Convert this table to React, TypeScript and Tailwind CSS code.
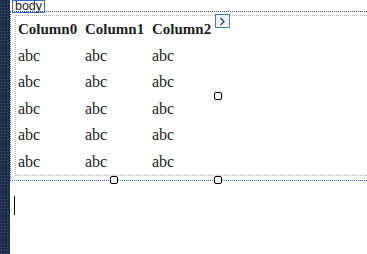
const columns = ['Column0', 'Column1', 'Column2'];
const rows = [0, 1, 2, 3, 4];

const Handle = ({ x, y }: { x: number; y: number }) => (
  <div
    className="absolute w-[8px] h-[8px] rounded-[2px] border-[1.5px] border-black bg-white"
    style={{ left: x - 4, top: y - 4 }}
  />
);

export default function App() {
  return (
    <div className="relative w-[367px] h-[254px] flex bg-white overflow-hidden">
      {/* dark left strip */}
      <div className="w-[10px] h-full shrink-0 bg-[#1f2c4a] bg-[image:radial-gradient(#3e5078_0.8px,transparent_0.9px)] bg-[size:3px_3px]" />

      <div className="flex-1 flex flex-col">
        <div className="ml-[2px] w-[33px] h-[13px] border border-[#3b6cc4] bg-white flex items-center justify-center text-[12.5px] leading-[11px] text-[#1a1a1a] font-['Liberation_Sans',sans-serif]">
          body
        </div>

        <div className="-mt-[2px] border-t border-l border-b border-dotted border-t-[#34467a] border-l-[#2a6ed8] border-b-[#2a6ed8] pt-[3px] pl-[4px] pb-[4px]">
          <div className="border-t border-l border-b border-dotted border-[#b4b4b4] pl-[2px] font-['Liberation_Serif',serif] text-[16px] text-[#1c1c1c]">
            <div className="flex h-[26.5px] items-center font-bold text-[15px]">
              {columns.map((c) => (
                <div key={c} className="w-[67px] leading-[18px]">{c}</div>
              ))}
            </div>
            {rows.map((r) => (
              <div key={r} className="flex h-[26.5px] items-center">
                {columns.map((c) => (
                  <div key={c} className="w-[67px] leading-[18px]">abc</div>
                ))}
              </div>
            ))}
          </div>
        </div>
      </div>

      {/* column menu button */}
      <div className="absolute left-[215px] top-[14px] w-[15px] h-[14px] border border-[#4a76c4] bg-[#f2f2f2] flex items-center justify-center">
        <svg width="7" height="9" viewBox="0 0 7 9">
          <path d="M1.5 1 L5 4.5 L1.5 8" fill="none" stroke="#2a3f78" strokeWidth="1.3" />
        </svg>
      </div>

      <Handle x={114} y={180} />
      <Handle x={218} y={180} />
      <Handle x={218} y={96} />

      {/* caret */}
      <div className="absolute left-[14px] top-[196px] w-px h-[19px] bg-black" />
    </div>
  );
}
